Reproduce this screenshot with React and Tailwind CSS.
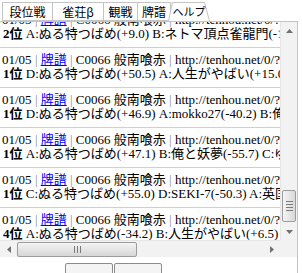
import React from 'react';

const entries = [
  { rank: 2, players: 'A:ぬる特つばめ(+9.0) B:ネトマ頂点雀龍門(-13.0) C:SEKI-7(+4.0)' },
  { rank: 1, players: 'D:ぬる特つばめ(+50.5) A:人生がやばい(+15.0) B:英国紳士(-25.5)' },
  { rank: 1, players: 'D:ぬる特つばめ(+46.9) A:mokko27(-40.2) B:俺と妖夢(-6.7)' },
  { rank: 1, players: 'A:ぬる特つばめ(+47.1) B:俺と妖夢(-55.7) C:ゆきぽ(+8.6)' },
  { rank: 1, players: 'C:ぬる特つばめ(+55.0) D:SEKI-7(-50.3) A:英国紳士(-4.7)' },
  { rank: 4, players: 'A:ぬる特つばめ(-34.2) B:人生がやばい(+6.5) C:mokko27(+27.7)' },
];

const Bar = () => <span className="text-[#8a8a8a]">|</span>;

const Entry = ({ rank, players }) => (
  <div className="border-b border-[#d0d0d0] pt-[5px] pb-[6px]">
    <div className="h-[14px] leading-[14px] whitespace-nowrap pl-[2px]">
      01/05 <Bar /> <a href="#" className="text-[#0000ee] underline">牌譜</a> <Bar /> C0066 般南喰赤 <Bar /> http://tenhou.net/0/?log=2013010514gm-0089-0000-3d2c1b0a
    </div>
    <div className="h-[14px] leading-[14px] whitespace-nowrap pl-[3px]">
      <b>{rank}位</b> {players}
    </div>
  </div>
);

const Tab = ({ children, w }) => (
  <div className={`${w} h-[19px] border border-[#c4c4c4] -ml-px first:ml-0 flex items-center justify-center text-[12px] leading-none bg-white`}>
    {children}
  </div>
);

const Arrow = ({ dir }) => {
  const pts = {
    up: '0,4 3.5,0 7,4',
    down: '0,0 3.5,4 7,0',
    left: '4,0 0,3.5 4,7',
    right: '0,0 4,3.5 0,7',
  }[dir];
  const vert = dir === 'up' || dir === 'down';
  return (
    <svg width={vert ? 7 : 4} height={vert ? 4 : 7} viewBox={vert ? '0 0 7 4' : '0 0 4 7'}>
      <polygon points={pts} fill="#707070" />
    </svg>
  );
};

export default function App() {
  return (
    <div className="w-[302px] h-[273px] bg-white overflow-hidden text-black font-['Liberation_Serif','Noto_Sans_CJK_JP',serif]">
      {/* tabs */}
      <div className="h-[21px] pt-[2px] pl-[2px] flex items-end font-['Noto_Sans_CJK_JP',sans-serif] relative z-10 bg-white">
        <Tab w="w-[51px]">段位戦</Tab>
        <Tab w="w-[52px]">雀荘β</Tab>
        <Tab w="w-[35px]">観戦</Tab>
        <Tab w="w-[34px]">牌譜</Tab>
        <div className="relative w-[42px] h-[19px] -ml-[3px] flex items-center justify-center text-[11px] leading-none">
          <svg className="absolute inset-0" width="42" height="19" viewBox="0 0 42 19">
            <path d="M0.5 19 L4.5 0.5 L36.5 0.5 L41.5 19" fill="white" stroke="#c4c4c4" />
          </svg>
          <span className="relative">ヘルプ</span>
        </div>
      </div>

      {/* panel */}
      <div className="w-[298px] h-[252px] border-t border-r border-[#c4c4c4]">
        <div className="w-[297px] h-[235px] border-b border-[#c4c4c4] flex flex-col">
          <div className="flex h-[218px]">
            <div className="w-[280px] h-[218px] overflow-hidden [clip-path:inset(0)] text-[13px]">
              <div className="-mt-[14px]">
                {entries.map((e, i) => (
                  <Entry key={i} rank={e.rank} players={e.players} />
                ))}
              </div>
            </div>
            {/* vertical scrollbar */}
            <div className="w-[17px] h-[218px] bg-[#f2f2f2] border-l border-[#e6e6e6] flex flex-col">
              <div className="h-[17px] flex items-center justify-center"><Arrow dir="up" /></div>
              <div className="flex-1 flex flex-col justify-end px-[1px]">
                <div className="h-[32px] mb-[1px] rounded-[2px] border border-[#9c9c9c] bg-gradient-to-r from-[#f4f4f4] to-[#d9d9d9] flex flex-col items-center justify-center gap-[2px]">
                  <div className="w-[7px] h-px bg-[#7a7a7a]" />
                  <div className="w-[7px] h-px bg-[#7a7a7a]" />
                  <div className="w-[7px] h-px bg-[#7a7a7a]" />
                  <div className="w-[7px] h-px bg-[#7a7a7a]" />
                </div>
              </div>
              <div className="h-[17px] flex items-center justify-center"><Arrow dir="down" /></div>
            </div>
          </div>
          {/* horizontal scrollbar */}
          <div className="flex h-[17px]">
            <div className="w-[280px] h-[17px] bg-[#f2f2f2] border-t border-[#e6e6e6] flex items-center">
              <div className="w-[17px] flex justify-center"><Arrow dir="left" /></div>
              <div className="w-[120px] h-[15px] rounded-[2px] border border-[#9c9c9c] bg-gradient-to-b from-[#f4f4f4] to-[#d6d6d6] flex items-center justify-center gap-[2px]">
                <div className="w-px h-[7px] bg-[#7a7a7a]" />
                <div className="w-px h-[7px] bg-[#7a7a7a]" />
                <div className="w-px h-[7px] bg-[#7a7a7a]" />
              </div>
              <div className="flex-1" />
              <div className="w-[17px] flex justify-center"><Arrow dir="right" /></div>
            </div>
            <div className="w-[17px] h-[17px] bg-[#f2f2f2]" />
          </div>
        </div>
        {/* buttons */}
        <div className="flex pl-[65px] pt-[6px] gap-[1px]">
          <div className="w-[48px] h-[22px] border border-[#8c8c8c] rounded-[2px] bg-[#f4f4f4]" />
          <div className="w-[48px] h-[22px] border border-[#8c8c8c] rounded-[2px] bg-[#f4f4f4]" />
        </div>
      </div>
    </div>
  );
}
